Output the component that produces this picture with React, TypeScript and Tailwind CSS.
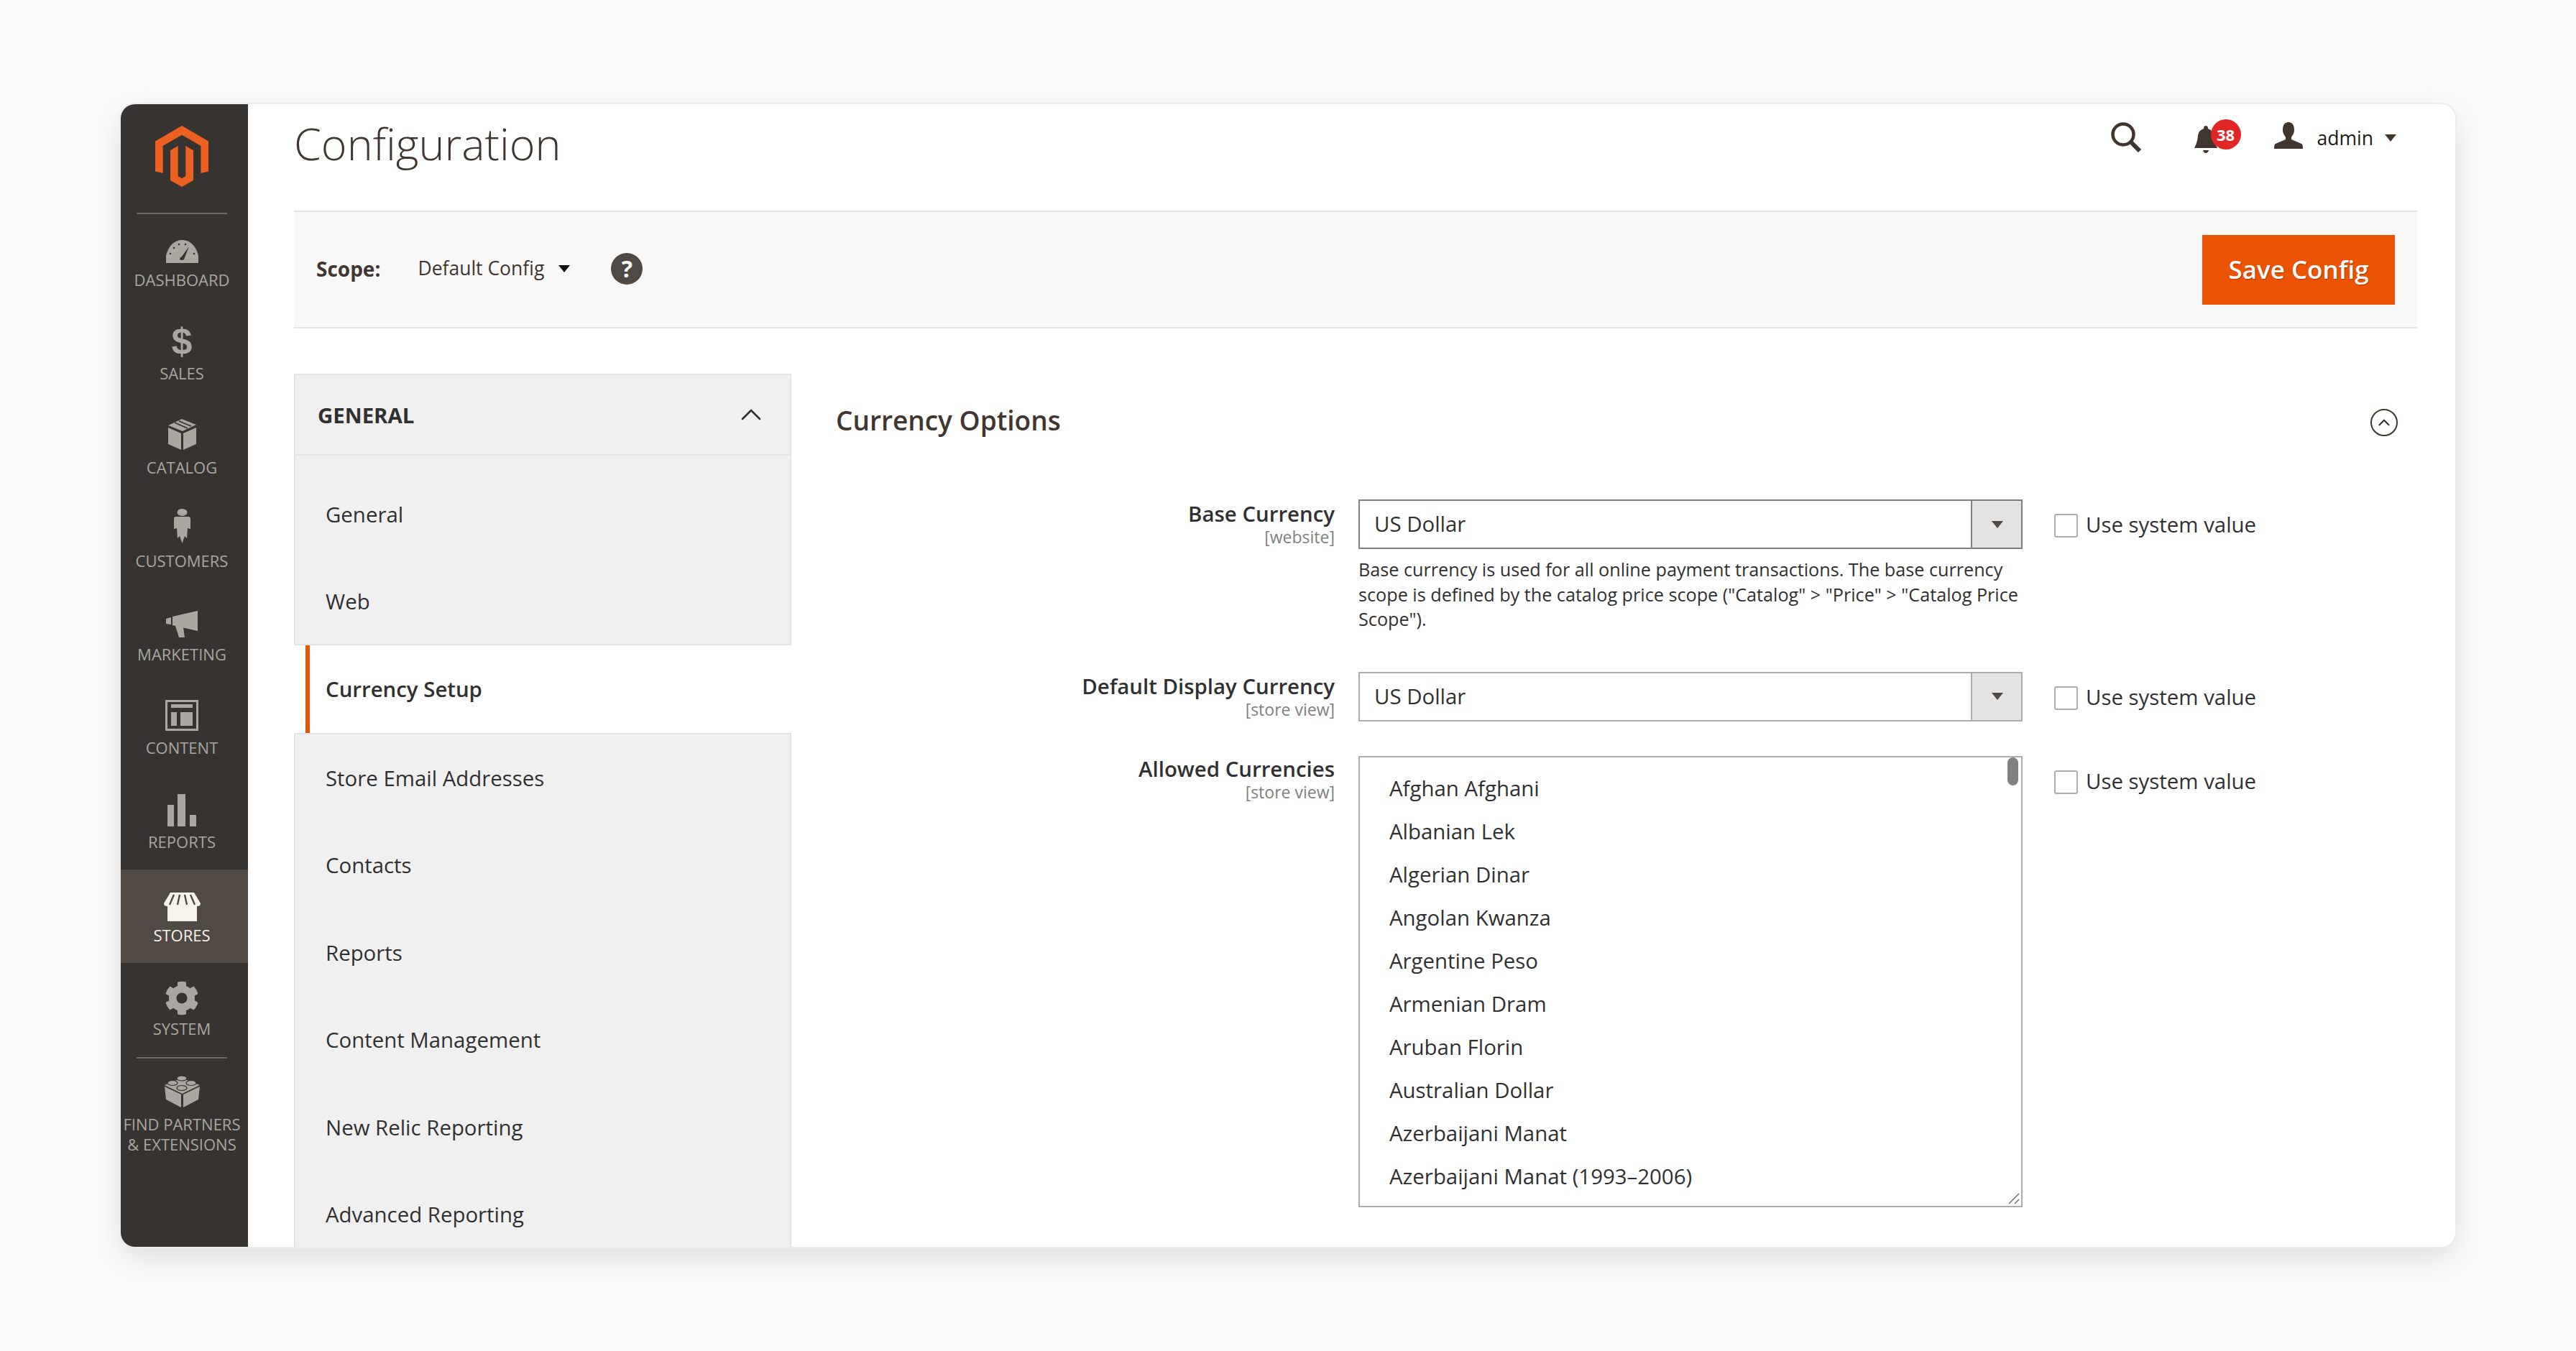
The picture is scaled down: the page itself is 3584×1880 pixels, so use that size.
import React from 'react';
import { FaCog } from 'react-icons/fa';
import { ChevronUp } from 'lucide-react';

const font = { fontFamily: '"Open Sans", "Liberation Sans", sans-serif' };

const Logo = () => (
  <svg width="74" height="85" viewBox="0 0 74 85" fill="#ec6120">
    <path d="M37 0 74 21.4V63.5L63.4 66V28L37 12.7 10.6 28V66L0 63.5V21.4Z" />
    <path d="M42.3 70.1 37 73.2 31.7 70.2V28L21 34.2V76L37 85 53 76V34.2L42.3 28Z" />
  </svg>
);

const Gauge = () => (
  <svg width="45" height="32" viewBox="0 0 45 32" fill="currentColor">
    <path d="M0 32V22C3 8 12 0 22.5 0 33 0 42 8 45 22V32Z" />
    <g fill="#373330">
      <circle cx="6" cy="19" r="1.3" />
      <circle cx="11" cy="11" r="1.3" />
      <circle cx="18" cy="6" r="1.3" />
      <circle cx="27" cy="6" r="1.3" />
      <circle cx="39" cy="19" r="1.3" />
      <path d="M32 9 25 27Q22 29 19 27 19 24 22 23Z" />
    </g>
  </svg>
);

const Box = () => (
  <svg width="39" height="43" viewBox="0 0 39 43" fill="currentColor">
    <path d="M19 0 39 8 20 17 0 9Z" />
    <path d="M0 12 18 20V43L0 35ZM39 12 21 20V43L39 35Z" />
    <path d="M9 5 27 13M15 3 32 10" stroke="#373330" strokeWidth="1.6" />
  </svg>
);

const Person = () => (
  <svg width="23" height="48" viewBox="0 0 23 48" fill="currentColor">
    <ellipse cx="11.5" cy="5" rx="7" ry="5" />
    <path d="M3 11H20Q23 11 23 14V28L19 27 18 41 15 38 11.5 48 8 38 5 41 4 27 0 28V14Q0 11 3 11Z" />
  </svg>
);

const Megaphone = () => (
  <svg width="44" height="37" viewBox="0 0 44 37" fill="currentColor">
    <path d="M0 11 7 9V19L0 18ZM9 8 44 0V28L9 20ZM13 21 24 23 26 37H18Z" />
  </svg>
);

const ContentIcon = () => (
  <svg width="46" height="43" viewBox="0 0 46 43" fill="currentColor">
    <path fillRule="evenodd" d="M0 0H46V43H0ZM3 3V40H43V3Z" />
    <path d="M8 6H38V11H8ZM8 17H16V36H8ZM21 17H38V36H21Z" />
  </svg>
);

const Bars = () => (
  <svg width="40" height="45" viewBox="0 0 40 45" fill="currentColor">
    <path d="M0 15H9V45H0ZM14 0H25V45H14ZM31 29H40V45H31Z" />
  </svg>
);

const Shop = () => (
  <svg width="51" height="40" viewBox="0 0 51 40" fill="currentColor">
    <path d="M9 0H42L51 15Q51 19 47 19H4Q0 19 0 15Z" />
    <path d="M5 19H46V40H5Z" />
    <path d="M14 3 8 17M22 3 19 17M29 3 32 17M37 3 43 17" stroke="#514943" strokeWidth="2.4" fill="none" />
  </svg>
);

const Brick = () => (
  <svg width="49" height="45" viewBox="0 0 49 45" fill="currentColor">
    <path d="M24 4 49 14 24.5 26 0 14Z" />
    <path d="M0 16 23 27V45L2 34ZM49 16 26 27V45L47 34Z" />
    <g stroke="#373330" strokeWidth="1.2">
      <ellipse cx="24" cy="4.5" rx="7" ry="3.5" />
      <ellipse cx="11" cy="11" rx="7" ry="3.5" />
      <ellipse cx="37" cy="11" rx="7" ry="3.5" />
      <ellipse cx="24" cy="18" rx="7" ry="3.5" />
    </g>
  </svg>
);

const Search = () => (
  <svg width="42" height="42" viewBox="0 0 42 42" fill="none" stroke="#41362f">
    <circle cx="17" cy="17" r="14.5" strokeWidth="4.5" />
    <path d="M28 28 40 40" strokeWidth="6" />
  </svg>
);

const Bell = () => (
  <svg width="32" height="38" viewBox="0 0 32 38" fill="#41362f">
    <path d="M16 0Q19 0 19 4 26 6 27 14 28 24 32 31H0Q4 24 5 14 6 6 13 4 13 0 16 0Z" />
    <path d="M12 34H20Q19 38 16 38 13 38 12 34Z" />
  </svg>
);

const User = () => (
  <svg width="40" height="37" viewBox="0 0 40 37" fill="#41362f">
    <path d="M20 0C26 0 28 5 28 11 28 16 25 19 24 21V24L38 30Q40 31 40 37H0Q0 31 2 30L16 24V21C15 19 12 16 12 11 12 5 14 0 20 0Z" />
  </svg>
);

const Caret = ({ color = '#41362f' }: { color?: string }) => (
  <svg width="16" height="10" viewBox="0 0 16 10" fill={color}>
    <path d="M0 0H16L8 10Z" />
  </svg>
);

const navItems = [
  { label: 'DASHBOARD', icon: <Gauge />, pad: 'pb-[9px]' },
  { label: 'SALES', icon: <span className="text-[52px] font-bold leading-[41px]" style={{ fontFamily: '"Liberation Sans"' }}>$</span>, pad: 'pb-[9px]' },
  { label: 'CATALOG', icon: <Box />, pad: 'pb-[10px]' },
  { label: 'CUSTOMERS', icon: <Person />, pad: 'pb-[10px]' },
  { label: 'MARKETING', icon: <Megaphone />, pad: 'pb-[9px]' },
  { label: 'CONTENT', icon: <ContentIcon />, pad: 'pb-[9px]' },
  { label: 'REPORTS', icon: <Bars />, pad: 'pb-[7px]' },
  { label: 'STORES', icon: <Shop />, pad: 'pb-[5px]', active: true },
  { label: 'SYSTEM', icon: <FaCog size={48} />, pad: 'pb-[4px]' },
];

const tabs = ['General', 'Web', 'Currency Setup', 'Store Email Addresses', 'Contacts', 'Reports', 'Content Management', 'New Relic Reporting', 'Advanced Reporting'];

const currencies = [
  'Afghan Afghani', 'Albanian Lek', 'Algerian Dinar', 'Angolan Kwanza', 'Argentine Peso',
  'Armenian Dram', 'Aruban Florin', 'Australian Dollar', 'Azerbaijani Manat', 'Azerbaijani Manat (1993–2006)',
];

const Sidebar = () => (
  <aside className="w-[177px] shrink-0 bg-[#373330] flex flex-col">
    <div className="h-[151px] pt-[30px] pr-[7px] flex justify-center">
      <Logo />
    </div>
    <div className="ml-[22px] w-[126px] h-[2px] bg-[#736963]" />
    <nav>
      {navItems.map((item) => (
        <div
          key={item.label}
          className={`h-[130.3px] pr-[7px] flex flex-col items-center ${item.active ? 'bg-[#514943] text-[#f7f3eb]' : 'text-[#aaa6a0]'}`}
        >
          <div className={`flex items-end justify-center h-[77px] ${item.pad}`}>{item.icon}</div>
          <div className="text-[22px] leading-[28px]">{item.label}</div>
        </div>
      ))}
    </nav>
    <div className="ml-[22px] w-[126px] h-[2px] bg-[#736963]" />
    <div className="flex flex-col items-center text-[#aaa6a0] pt-[23px] pr-[7px]">
      <Brick />
      <div className="text-[22px] leading-[28px] mt-[9px] text-center whitespace-nowrap">
        FIND PARTNERS
        <br />& EXTENSIONS
      </div>
    </div>
  </aside>
);

const TopBar = () => (
  <div className="h-[148px] flex justify-between pr-[29px]">
    <h1 className="text-[61px] font-[350] text-[#41362f] leading-[76px] pt-[17px]">Configuration</h1>
    <div className="flex items-start pt-[25px]">
      <Search />
      <div className="relative ml-[74px] mt-[5px] w-[64px]">
        <Bell />
        <span className="absolute left-[23px] top-[-9px] w-[42px] h-[42px] rounded-full bg-[#e22626] text-white text-[22px] font-bold flex items-center justify-center">38</span>
      </div>
      <div className="ml-[47px]"><User /></div>
      <span className="ml-[20px] text-[26.5px] leading-[44px] text-[#1f1a17]">admin</span>
      <span className="ml-[16px] mt-[17px]"><Caret /></span>
    </div>
  </div>
);

const ScopeBar = () => (
  <div className="h-[164px] border-y-2 border-[#e3e3e3] bg-[#f8f8f8] flex items-center justify-between pl-[31px] pr-[31px]">
    <div className="flex items-center -mt-[2px]">
      <span className="text-[28px] font-bold text-[#41362f]">Scope:</span>
      <span className="ml-[52px] text-[26.5px] text-[#41362f]">Default Config</span>
      <span className="ml-[20px]"><Caret color="#111111" /></span>
      <span className="ml-[57px] w-[44px] h-[44px] rounded-full bg-[#514943] text-white text-[32px] font-bold flex items-center justify-center">?</span>
    </div>
    <button className="w-[268px] h-[97px] bg-[#eb5202] text-white text-[35px] font-semibold [text-shadow:1px_1px_1px_rgba(0,0,0,0.3)]">
      Save Config
    </button>
  </div>
);

const TabRow = ({ label }: { label: string }) => (
  <div className="h-[121.5px] flex items-center pl-[42px] text-[29.4px] text-[#303030]">{label}</div>
);

const TabsPanel = () => (
  <div className="w-[692px] shrink-0">
    <div className="h-[114px] border-2 border-[#e3e3e3] bg-[#f0f0f0] flex items-center justify-between pl-[31px] pr-[30px]">
      <span className="text-[29.4px] font-bold text-[#303030] mt-[2px]">GENERAL</span>
      <ChevronUp size={48} strokeWidth={1.3} className="text-[#303030]" />
    </div>
    <div className="border-x-2 border-b-2 border-[#e3e3e3] bg-[#f0f0f0] pt-[21px] h-[264px]">
      {tabs.slice(0, 2).map((t) => <TabRow key={t} label={t} />)}
    </div>
    <div className="ml-[16px] border-l-[6px] border-[#eb5202] h-[122px] bg-white flex items-center pl-[22px] text-[29.4px] font-semibold text-[#303030]">
      {tabs[2]}
    </div>
    <div className="border-2 border-[#e3e3e3] bg-[#f0f0f0] h-[900px]">
      {tabs.slice(3).map((t) => <TabRow key={t} label={t} />)}
    </div>
  </div>
);

const FieldLabel = ({ title, scope, lift }: { title: string; scope: string; lift?: boolean }) => (
  <div className={`w-[694px] shrink-0 text-right ${lift ? '-mt-[2px]' : ''}`}>
    <div className="text-[29.4px] leading-[40px] font-semibold text-[#303030]">{title}</div>
    <div className="text-[23px] leading-[24px] text-[#808080]">{scope}</div>
  </div>
);

const SelectBox = ({ dark }: { dark?: boolean }) => (
  <div className={`h-[69px] flex border-2 bg-white ${dark ? 'border-[#808080]' : 'border-[#adadad]'}`}>
    <div className="flex-1 flex items-center pl-[20px] text-[29.4px] text-[#303030]">US Dollar</div>
    <div className={`w-[70px] bg-[#e3e3e3] flex items-center justify-center border-l-2 pl-[2px] ${dark ? 'border-[#808080]' : 'border-[#adadad]'}`}>
      <Caret color="#514943" />
    </div>
  </div>
);

const SystemValue = ({ mt }: { mt: string }) => (
  <div className={`ml-[44px] flex items-center ${mt}`}>
    <span className="w-[33px] h-[33px] rounded-[3px] border-2 border-[#adadad] bg-white" />
    <span className="ml-[11px] -mt-[3px] text-[29.4px] text-[#303030]">Use system value</span>
  </div>
);

const CurrencyForm = () => (
  <div className="flex-1 pl-[62px]">
    <div className="flex items-center justify-between pr-[27px] h-[175px] pb-[45px]">
      <h2 className="text-[37px] font-semibold text-[#41362f]">Currency Options</h2>
      <span className="w-[38px] h-[38px] rounded-full border-2 border-[#41362f] flex items-center justify-center mt-[6px]">
        <ChevronUp size={26} strokeWidth={2} className="text-[#303030]" />
      </span>
    </div>

    <div className="flex items-start mb-[56px]">
      <FieldLabel title="Base Currency" scope="[website]" />
      <div className="ml-[33px] w-[924px] shrink-0">
        <SelectBox dark />
        <p className="mt-[11px] text-[25.2px] leading-[34.5px] text-[#303030]">
          Base currency is used for all online payment transactions. The base currency scope is defined by the catalog price scope ("Catalog" &gt; "Price" &gt; "Catalog Price Scope").
        </p>
      </div>
      <SystemValue mt="mt-[16px]" />
    </div>

    <div className="flex items-start mb-[48px]">
      <FieldLabel title="Default Display Currency" scope="[store view]" />
      <div className="ml-[33px] w-[924px] shrink-0">
        <SelectBox />
      </div>
      <SystemValue mt="mt-[16px]" />
    </div>

    <div className="flex items-start">
      <FieldLabel title="Allowed Currencies" scope="[store view]" lift />
      <div className="ml-[33px] w-[924px] h-[628px] shrink-0 border-2 border-[#adadad] bg-white relative pt-[14px] pl-[41px]">
        {currencies.map((c) => (
          <div key={c} className="h-[60px] flex items-center text-[29.4px] text-[#303030]">{c}</div>
        ))}
        <span className="absolute top-0 right-[4px] w-[15px] h-[39px] rounded-full bg-[#808080]" />
        <svg className="absolute right-[2px] bottom-[2px]" width="16" height="16" viewBox="0 0 16 16" stroke="#666666" strokeWidth="1.4">
          <path d="M1 15 15 1M9 15 15 9" />
        </svg>
      </div>
      <SystemValue mt="mt-[16px]" />
    </div>
  </div>
);

export default function App() {
  return (
    <div className="w-[3584px] h-[1880px] bg-[#fbfbfb] pt-[145px] pl-[168px] overflow-hidden" style={font}>
      <div className="w-[3248px] h-[1590px] flex rounded-[20px] overflow-hidden bg-white shadow-[0_0_0_2px_#ececec,0_14px_44px_rgba(0,0,0,0.12)]">
        <Sidebar />
        <main className="flex-1 pl-[64px] pr-[53px]">
          <TopBar />
          <ScopeBar />
          <div className="flex pt-[63px]">
            <TabsPanel />
            <CurrencyForm />
          </div>
        </main>
      </div>
    </div>
  );
}
